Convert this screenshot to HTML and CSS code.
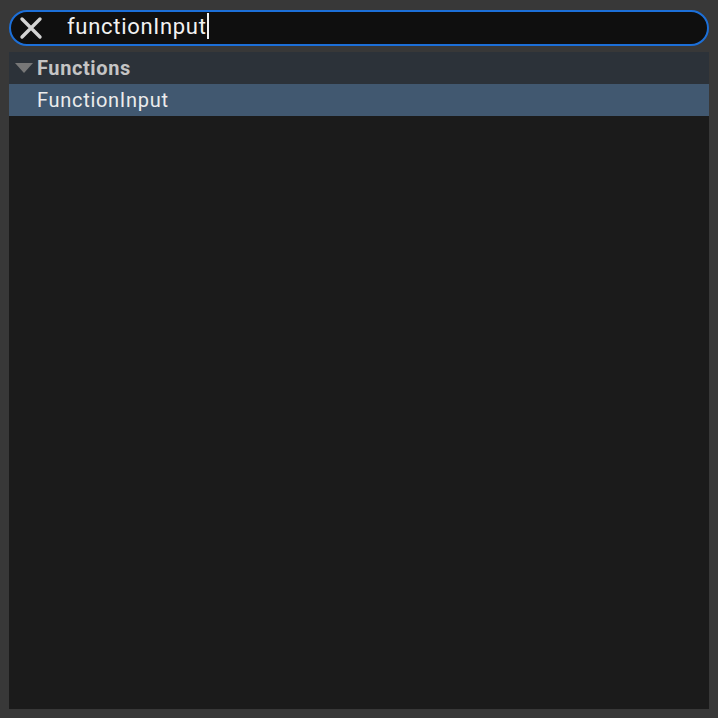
FILE: index.html
```html
<!DOCTYPE html>
<html>
<head>
  <meta charset="UTF-8">
  <title>Function Search</title>
  <link rel="stylesheet" href="styles.css">
</head>
<body>

  <div class="search">
    <svg class="clear" width="24" height="24" viewBox="0 0 24 24">
      <path d="M3 3 L21 21 M21 3 L3 21" stroke="#d4d4d4" stroke-width="3.4" stroke-linecap="round"/>
    </svg>
    <div class="field">
      <span class="query">functionInput</span><span class="caret"></span>
    </div>
  </div>

  <!-- Results -->
  <div class="results">
    <div class="group">
      <svg class="arrow" width="18" height="10" viewBox="0 0 18 10">
        <polygon points="0,0 18,0 9,10" fill="#777"/>
      </svg>
      <span>Functions</span>
    </div>
    <div class="item selected">FunctionInput</div>
  </div>

</body>
</html>
```

FILE: styles.css
```css
html, body {
  margin: 0;
  height: 100%;
}
body {
  font-family: Roboto, "Noto Sans", sans-serif;
  background: #383838;
  padding: 10px 9px 9px 9px;
  box-sizing: border-box;
  display: flex;
  flex-direction: column;
  gap: 6px;
}
.search {
  height: 36px;
  box-sizing: border-box;
  border: 2px solid #1c6fd8;
  border-radius: 18px;
  background: #0f0f0f;
  display: flex;
  align-items: center;
  padding-left: 8px;
}
.clear { flex: none; }
.field {
  display: flex;
  align-items: center;
  margin-left: 24px;
  margin-bottom: 4px;
}
.query {
  color: #f2f2f2;
  font-size: 22px;
  letter-spacing: 0.7px;
}
.caret {
  width: 2px;
  height: 26px;
  background: #f2f2f2;
}
.results {
  flex: 1;
  background: #1b1b1b;
}
.group {
  height: 32px;
  background: #2c3239;
  display: flex;
  align-items: center;
  padding-left: 6px;
  gap: 4px;
  color: #c4c4c4;
  font-weight: bold;
  font-size: 20px;
  letter-spacing: 0.6px;
}
.item {
  height: 32px;
  display: flex;
  align-items: center;
  padding-left: 28px;
  color: #ececec;
  font-size: 20px;
  letter-spacing: 0.7px;
}
.selected { background: #415870; }
```
